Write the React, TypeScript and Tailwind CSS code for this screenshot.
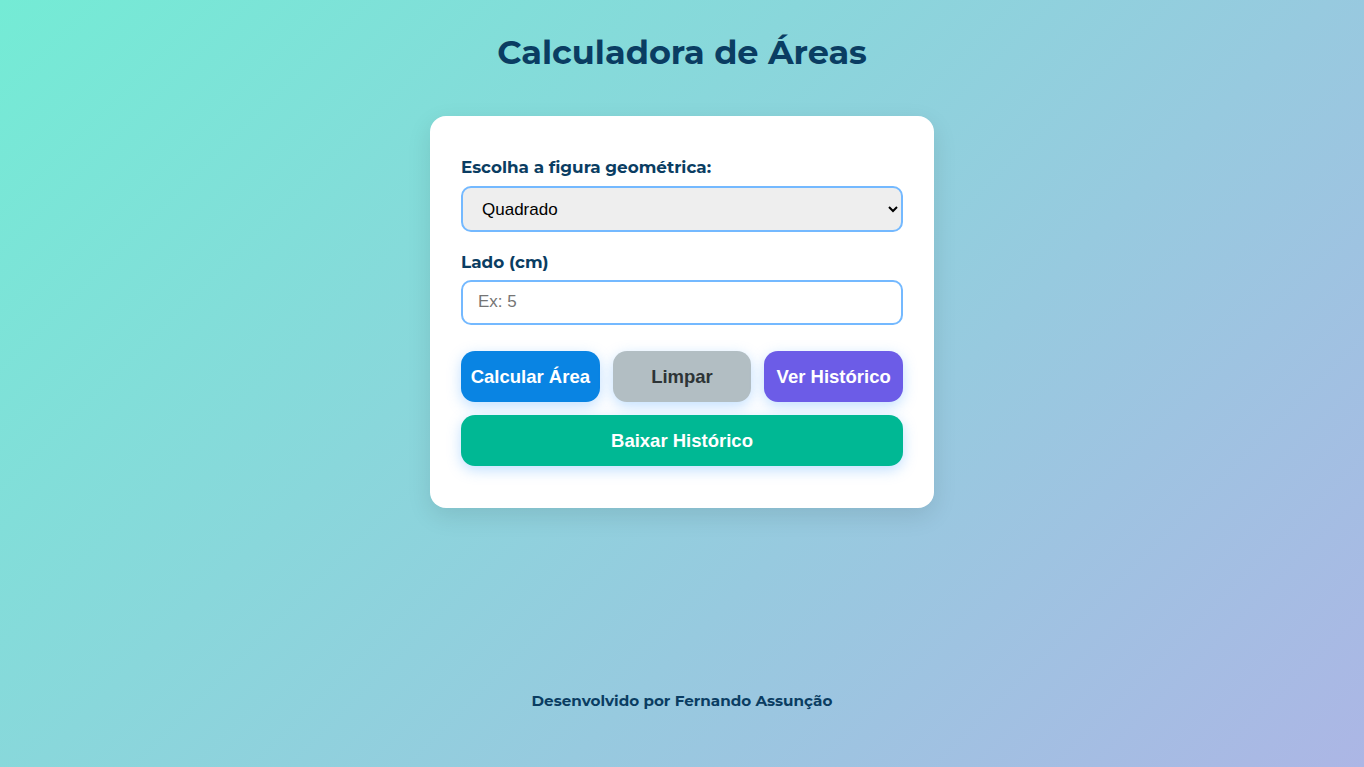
import React, { useState } from 'react';

const heading = "font-['Montserrat','Open_Sans',sans-serif]";

export default function App() {
  const [figura, setFigura] = useState('quadrado');
  const [lado, setLado] = useState('');

  const btn =
    "h-[51px] rounded-[14px] pt-[1px] font-['Liberation_Sans',Arial,sans-serif] text-[18.5px] font-bold shadow-[0_4px_14px_rgba(116,185,255,0.45)]";

  return (
    <div className="min-h-screen w-full bg-[linear-gradient(135deg,#74ebd5,#acb6e5)] flex flex-col items-center">
      <h1 className={`${heading} mt-[27px] text-[33.5px] leading-[50px] font-bold text-[#0a3d62]`}>
        Calculadora de Áreas
      </h1>

      <div className="mt-[39px] w-[504px] rounded-[16px] bg-white pt-[39px] px-[31px] pb-[42px] shadow-[0_8px_24px_rgba(0,0,0,0.1)]">
        <label className={`${heading} block text-[16.8px] leading-[24px] font-bold text-[#0a3d62]`}>
          Escolha a figura geométrica:
        </label>
        <select
          value={figura}
          onChange={(e) => setFigura(e.target.value)}
          className="mt-[7px] block w-full h-[46px] rounded-[10px] border-2 border-[#74b9ff] bg-[#eeeeee] px-[15px] font-['Liberation_Sans',Arial,sans-serif] text-[17px] text-black outline-none"
        >
          <option value="quadrado">Quadrado</option>
          <option value="retangulo">Retângulo</option>
          <option value="triangulo">Triângulo</option>
          <option value="circulo">Círculo</option>
        </select>

        <label className={`${heading} mt-[18px] block text-[16.8px] leading-[24px] font-bold text-[#0a3d62]`}>
          Lado (cm)
        </label>
        <input
          type="number"
          value={lado}
          onChange={(e) => setLado(e.target.value)}
          placeholder="Ex: 5"
          className="mt-[6px] block w-full h-[45px] rounded-[10px] border-2 border-[#74b9ff] bg-white px-[15px] pb-[2px] font-['Liberation_Sans',Arial,sans-serif] text-[17px] text-black placeholder:text-[#757575] outline-none"
        />

        <div className="mt-[26px] grid grid-cols-3 gap-[13px]">
          <button className={`${btn} bg-[#0984e3] text-white`}>Calcular Área</button>
          <button className={`${btn} bg-[#b2bec3] text-[#2d3436]`}>Limpar</button>
          <button className={`${btn} bg-[#6c5ce7] text-white`}>Ver Histórico</button>
        </div>
        <button className={`${btn} mt-[13px] w-full bg-[#00b894] text-white`}>Baixar Histórico</button>
      </div>

      <footer className={`${heading} mt-auto mb-[54px] text-[15.2px] font-bold text-[#0a3d62]`}>
        Desenvolvido por Fernando Assunção
      </footer>
    </div>
  );
}
